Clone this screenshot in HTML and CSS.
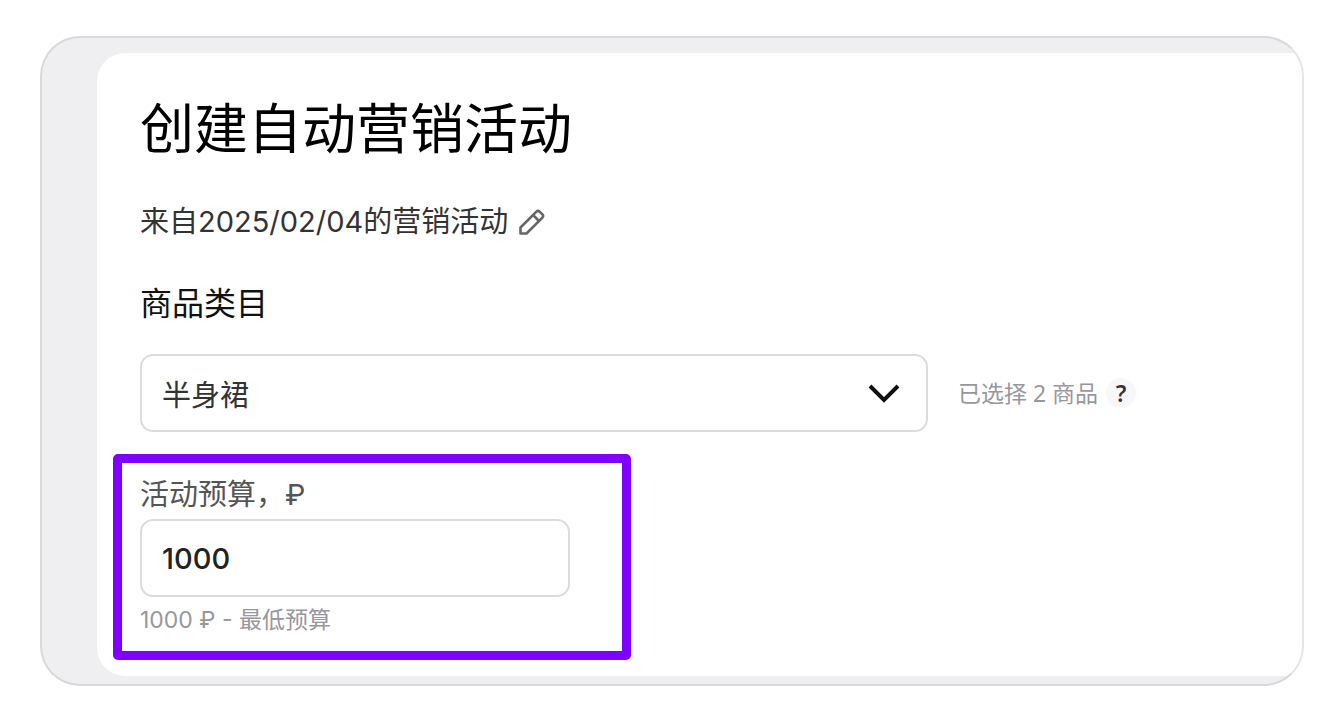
FILE: index.html
```
<!DOCTYPE html>
<html lang="zh">
<head>
    <meta charset="UTF-8">
    <meta name="viewport" content="width=device-width, initial-scale=1.0">
    <title>创建自动营销活动</title>
    <link rel="stylesheet" href="styles.css">
</head>
<body>
    <div class="frame">
        <main class="panel">
            <h1 class="title">创建自动营销活动</h1>

            <div class="campaign-name">
                <span>来自2025/02/04的营销活动</span>
                <button type="button" class="edit-btn" aria-label="编辑">
                    <svg width="28" height="28" viewBox="0 0 28 28" fill="none" stroke="currentColor" stroke-width="2.6" stroke-linejoin="round">
                        <path d="M2.5 25.5V19.5L18.2 3.8Q20 2 21.8 3.8L24.2 6.2Q26 8 24.2 9.8L8.5 25.5Z"/>
                        <path d="M15 7L21 13"/>
                    </svg>
                </button>
            </div>

            <form class="campaign-form">
                <label class="section-title" for="category">商品类目</label>
                <div class="category-row">
                    <div class="select-wrap">
                        <select id="category" class="control category-select">
                            <option>半身裙</option>
                        </select>
                        <svg class="chevron" width="32" height="20" viewBox="0 0 32 20" fill="none" stroke="#111" stroke-width="4">
                            <path d="M2 2L16 16L30 2"/>
                        </svg>
                    </div>
                    <div class="selected">
                        <span>已选择 2 商品</span>
                        <button type="button" class="help-btn">?</button>
                    </div>
                </div>

                <div class="budget">
                    <label class="budget-label" for="budget">活动预算，₽</label>
                    <input type="text" id="budget" class="control budget-input" value="1000" inputmode="numeric">
                    <div class="hint">1000 ₽ - 最低预算</div>
                </div>
            </form>
        </main>
    </div>
</body>
</html>
```
FILE: styles.css
```
:root {
    --accent: #7f00ff;
    --text: #333;
    --muted: #97979d;
    --border: #dcdcde;
    --gray-bg: #efeff1;
}
* { box-sizing: border-box; }
body {
    margin: 0;
    padding: 36px 40px;
    background: #fff;
    color: var(--text);
    font-family: Inter, "Noto Sans CJK SC", sans-serif;
    font-size: 29px;
    line-height: 40px;
}
.frame {
    padding: 15px 0 8px 55px;
    border: 2px solid #d9d9db;
    border-right-color: #e6e6e8;
    border-radius: 40px;
    background: var(--gray-bg);
    overflow: hidden;
}
.panel {
    padding: 45px 43px 16px;
    background: #fff;
    border-radius: 28px 0 0 28px;
}
.title {
    margin: 0 0 40px;
    color: #000;
    font-size: 54px;
    font-weight: 400;
    line-height: 64px;
}
.campaign-name {
    display: flex;
    align-items: center;
    gap: 10px;
    margin-bottom: 42px;
}
button {
    padding: 0;
    border: none;
    background: none;
    font-family: inherit;
    cursor: pointer;
}
.edit-btn {
    display: flex;
    color: #666;
}
.section-title {
    display: block;
    margin-bottom: 30px;
    color: #111;
    font-size: 32px;
}
.category-row {
    display: flex;
    align-items: center;
    gap: 30px;
}
.select-wrap {
    position: relative;
    flex: 0 1 788px;
}
.control {
    display: block;
    width: 100%;
    height: 78px;
    padding: 0 20px;
    border: 2px solid var(--border);
    border-radius: 13px;
    background: #fff;
    color: var(--text);
    font-family: inherit;
    font-size: 29px;
    appearance: none;
    outline: none;
}
.control:focus {
    border-color: var(--accent);
}
.category-select {
    padding-top: 4px;
}
.chevron {
    position: absolute;
    top: 30px;
    right: 28px;
    pointer-events: none;
}
.selected {
    display: flex;
    align-items: center;
    gap: 8px;
    color: var(--muted);
    font-family: "Noto Sans", "Noto Sans CJK SC", sans-serif;
    font-size: 23px;
    white-space: nowrap;
}
.help-btn {
    width: 30px;
    height: 30px;
    border-radius: 50%;
    background: #f7f7fa;
    color: #333;
    font-size: 23px;
    font-weight: 600;
    line-height: 30px;
}
.budget {
    max-width: 518px;
    margin: 22px 0 0 -27px;
    padding: 12px 52px 15px 18px;
    border: 9px solid var(--accent);
    border-radius: 5px;
}
.budget-label {
    display: block;
    margin-bottom: 4px;
    color: #555;
}
.budget-input {
    color: #222;
    font-weight: 500;
}
.hint {
    margin-top: 7px;
    color: var(--muted);
    font-size: 23px;
    line-height: 32px;
}
```
